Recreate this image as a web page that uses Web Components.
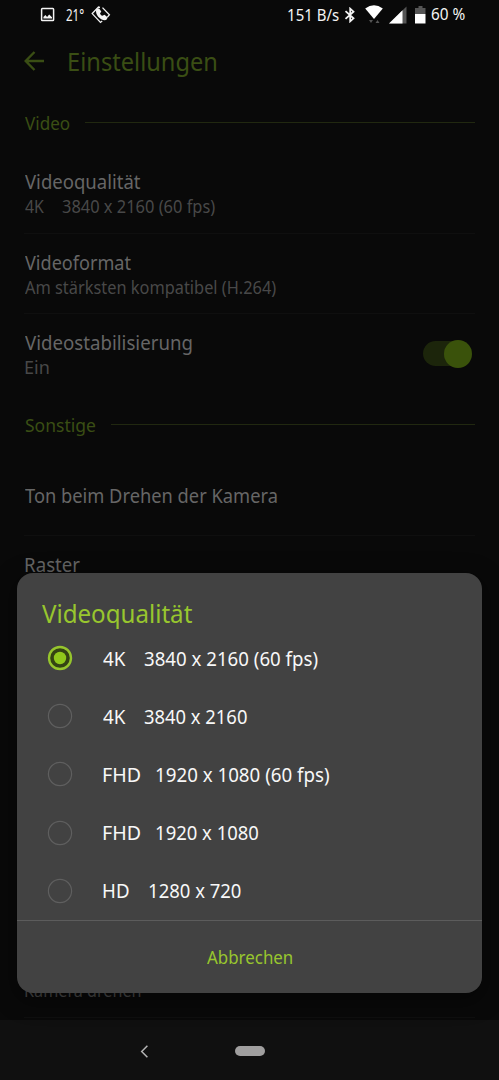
<!DOCTYPE html>
<html lang="de">
<head>
<meta charset="utf-8">
<title>Einstellungen</title>
<style>
html,body{margin:0;height:100%;background:#090909;overflow:hidden}
</style>
</head>
<body>
<camera-settings></camera-settings>
<script>
const define=(name,html,setup)=>customElements.define(name,class extends HTMLElement{
  connectedCallback(){
    if(!this.shadowRoot){this.attachShadow({mode:'open'}).innerHTML=html;}
    if(setup)setup(this,this.shadowRoot);
  }
});
const pen=document.createElement('canvas').getContext('2d');

/* Text set to a given ink width: size, w (ink width), h (line height) */
define('fit-text',`<style>:host{display:block;flex:none;white-space:pre;font-family:"Noto Sans",sans-serif}
span{display:inline-block;transform-origin:0 50%}</style><span><slot></slot></span>`,(el,root)=>{
  const size=+el.getAttribute('size')||19.5,w=+el.getAttribute('w'),h=el.getAttribute('h')||24;
  pen.font=size+'px "Noto Sans"';
  const m=pen.measureText(el.textContent);
  const s=w/(m.actualBoundingBoxLeft+m.actualBoundingBoxRight);
  el.style.cssText=`width:${w}px;height:${h}px;line-height:${h}px;font-size:${size}px`;
  root.querySelector('span').style.transform=`translateX(${m.actualBoundingBoxLeft*s}px) scaleX(${s})`;
});

define('status-bar',`<style>
:host{display:flex;height:29px;flex:none;align-items:center;color:#f4f4f4;padding:0 34px 0 40px}
svg{display:block;flex:none}.gap{flex:1}
</style>
<svg width="15" height="15" viewBox="0 0 15 15"><rect x="1.600" y="1.600" width="12" height="12" rx=".8" fill="none" stroke="#f4f4f4" stroke-width="1.500"/><path d="M3.400 11.600V10l2-2 1.700 1.900L9.200 7.500l2.800 2.800v1.300z" fill="#f4f4f4"/></svg>
<fit-text size="17" w="18" h="30">21°</fit-text>
<svg style="margin-left:7px" width="20" height="18" viewBox="0 0 20 18"><g fill="none" stroke="#f4f4f4" stroke-width="1.300"><path d="M9 1.300 7.500 1 1.200 7.600l8.300 8.800 1.700-1.300M11.500 1.600l6.900 7.200-2 2.300"/></g><path d="M5.200 3.300 8 2.200l2.300 3.300-1.300 1.900c.5 1.200 1.300 1.900 2.400 2.400l2.100-1 3.300 2.600-1.600 2.700c-5.500 1-11.400-5-10-10.800z" fill="#f4f4f4"/></svg>
<div class="gap"></div>
<fit-text size="16" w="50.500" h="28">151 B/s</fit-text>
<svg style="margin-left:6px" width="12" height="16" viewBox="0 0 12 16"><path d="M1.500 4.200 9.500 11.300 6.200 14.300V1.700L9.500 4.700 1.500 11.800" fill="none" stroke="#f4f4f4" stroke-width="1.800"/></svg>
<svg style="margin-left:9px" width="18" height="19" viewBox="0 0 18 19"><path d="M.2 3.500Q9-3.200 17.800 3.500L9 14z" fill="#fff"/><path d="M4 15h4l-2 3zM10.500 18h4l-2-3z" fill="#555"/></svg>
<svg style="margin-left:6px" width="18" height="18" viewBox="0 0 18 18"><path d="M0 17.500 17.500.5v17z" fill="#555"/><path d="M0 17.500 13.500 4.300v13.200z" fill="#fff"/></svg>
<svg style="margin-left:8px" width="11" height="18" viewBox="0 0 11 18"><path d="M3.500 0h4v2H10.500v6H0V2h3.500z" fill="#555"/><path d="M0 8h10.500v9.500H0z" fill="#fff"/></svg>
<fit-text size="16" w="34" h="29">60 %</fit-text>`,(el,root)=>{
  /* measured texts rewrite their style, so the spacing is set afterwards */
  const t=root.querySelectorAll('fit-text');
  t[0].style.marginLeft='11px';t[2].style.marginLeft='5px';
});

define('app-header',`<style>:host{display:flex;height:63px;flex:none;align-items:center;padding-left:24px;gap:24.500px;color:#3a4e14}svg{display:block;margin-top:1px}</style>
<svg width="20.500" height="20" viewBox="0 0 20.500 20"><path d="M10.500 1 1.700 10l8.800 9M1.700 10H20" fill="none" stroke="currentColor" stroke-width="2.400"/></svg>
<fit-text size="25" w="147.500" h="34">Einstellungen</fit-text>`);

define('section-head',`<style>:host{display:flex;align-items:center;gap:15px;padding:0 24px 0 25px;color:#3a4e14;flex:none}i{flex:1;height:1px;background:#212810}</style><slot></slot><i></i>`);

define('setting-row',`<style>:host{display:flex;box-sizing:border-box;flex:none;align-items:center;justify-content:space-between;margin:0 24px;padding:2px 0 0 .5px;border-bottom:1px solid #0f0f0f;color:#666}
:host([plain]){border-color:transparent}
.sub{display:flex;gap:18px;color:#484848}</style><div><slot></slot><div class="sub"><slot name="sub"></slot></div></div><slot name="end"></slot>`);

define('toggle-switch',`<style>:host{display:block;width:49px;height:28px;margin:-3px 3px 0 0;position:relative}
:host::before{content:"";position:absolute;left:0;top:1.500px;width:48px;height:25px;border-radius:13px;background:#1c250b}
b{position:absolute;right:0;top:0;width:28px;height:28px;border-radius:50%;background:#3a520b}</style><b></b>`);

define('radio-option',`<style>:host{display:flex;height:58.200px;align-items:center;padding-left:29.800px;color:#f8f8f8}
svg{display:block;width:26px;margin-right:30px}.t{display:flex;padding-top:1px}</style>
<svg height="26" viewBox="0 0 26 26"></svg><div class="t"><slot></slot></div>`,(el,root)=>{
  root.querySelector('svg').innerHTML=el.hasAttribute('checked')
   ?'<circle cx="13" cy="13" r="11" fill="#344313" stroke="#96c52d" stroke-width="2.400"/><circle cx="13" cy="13" r="6.200" fill="#90c81b"/>'
   :'<circle cx="13" cy="13" r="11.600" fill="none" stroke="#5f5f5f" stroke-width="1.200"/>';
  root.querySelector('.t').style.gap=el.getAttribute('gap')+'px';
});

define('choice-dialog',`<style>:host{display:block;position:absolute;box-sizing:border-box;left:17px;top:573px;width:464.500px;height:419.500px;border-radius:16px;background:#424242;box-shadow:0 6px 22px 3px #0006;overflow:hidden}
header{height:56px;box-sizing:border-box;padding:23px 0 0 25px;color:#98c62e}
footer{height:72px;box-sizing:border-box;border-top:1.500px solid #5c5c5c;display:flex;align-items:center;justify-content:center;padding-top:2px;color:#98c62e}</style>
<header><fit-text size="26" w="150" h="34">Videoqualität</fit-text></header>
<radio-option checked gap="18.500"><fit-text size="20" w="23">4K</fit-text><fit-text size="20" w="174">3840 x 2160 (60 fps)</fit-text></radio-option>
<radio-option gap="18.500"><fit-text size="20" w="23">4K</fit-text><fit-text size="20" w="103">3840 x 2160</fit-text></radio-option>
<radio-option gap="15.500"><fit-text size="20" w="37.500">FHD</fit-text><fit-text size="20" w="173.500">1920 x 1080 (60 fps)</fit-text></radio-option>
<radio-option gap="15.500"><fit-text size="20" w="37.500">FHD</fit-text><fit-text size="20" w="102.500">1920 x 1080</fit-text></radio-option>
<radio-option gap="20"><fit-text size="20" w="26">HD</fit-text><fit-text size="20" w="92">1280 x 720</fit-text></radio-option>
<footer><fit-text size="18.500" w="85">Abbrechen</fit-text></footer>`);

define('nav-bar',`<style>:host{display:flex;height:60px;flex:none;margin-top:auto;background:#101010;align-items:center;padding-left:140px}svg{display:block;margin:2px 86px 0 0}i{width:29.500px;height:10px;border-radius:5px;background:#a09f9f;margin-top:2px}</style>
<svg width="9" height="13" viewBox="0 0 9 13"><path d="M7.400.8 1.700 6.500l5.700 5.700" fill="none" stroke="#b5b5b5" stroke-width="1.500"/></svg><i></i>`);

define('camera-settings',`<style>:host{display:flex;flex-direction:column;width:499px;height:1080px;box-sizing:border-box;background:#090909;position:relative;overflow:hidden}
.more{height:424px;align-items:flex-start;padding-top:17px}</style>
<status-bar></status-bar><app-header></app-header>
<section-head style="height:61px"><fit-text size="18.500" w="45">Video</fit-text></section-head>
<setting-row style="height:81px"><fit-text w="115.500">Videoqualität</fit-text><fit-text slot="sub" size="17.500" w="19">4K</fit-text><fit-text slot="sub" size="17.500" w="153">3840 x 2160 (60 fps)</fit-text></setting-row>
<setting-row style="height:80px"><fit-text w="106">Videoformat</fit-text><fit-text slot="sub" size="17.500" w="251">Am stärksten kompatibel (H.264)</fit-text></setting-row>
<setting-row plain style="height:81px"><fit-text w="167">Videostabilisierung</fit-text><fit-text slot="sub" size="17.500" w="24">Ein</fit-text><toggle-switch slot="end"></toggle-switch></setting-row>
<section-head style="height:59px"><fit-text size="18.500" w="70.500">Sonstige</fit-text></section-head>
<setting-row style="height:82px"><fit-text w="252">Ton beim Drehen der Kamera</fit-text></setting-row>
<setting-row plain class="more"><fit-text w="55">Raster</fit-text></setting-row>
<setting-row style="height:58px"><fit-text slot="sub" size="18" w="115.500">Kamera drehen</fit-text></setting-row>
<nav-bar></nav-bar><choice-dialog></choice-dialog>`);
</script>
</body>
</html>
